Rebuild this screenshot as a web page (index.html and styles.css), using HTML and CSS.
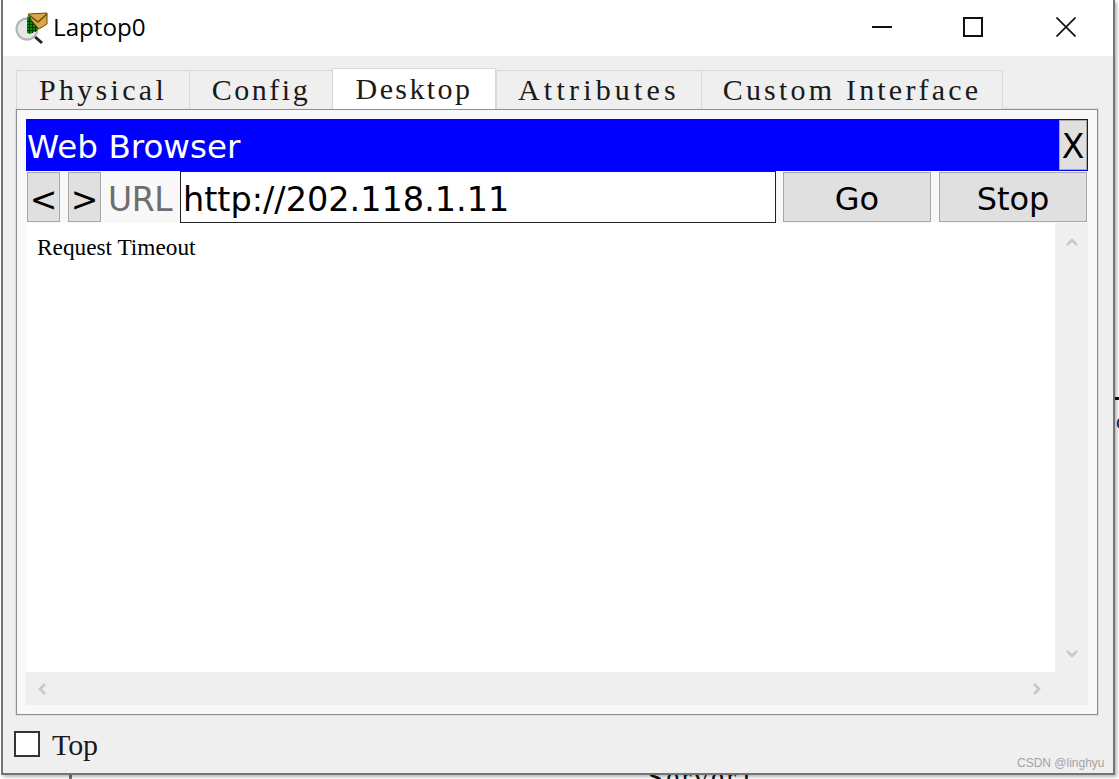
FILE: index.html
```html
<!DOCTYPE html>
<html lang="en">
<head>
<meta charset="utf-8">
<title>Laptop0</title>
<link rel="stylesheet" href="styles.css">
</head>
<body>
<div class="desktop">
  <div class="bg-label">Server1</div>
  <div class="bg-link"></div>
  <div class="bg-edge-line"></div>
  <div class="bg-edge-char">c</div>
  <div class="window">
    <header class="titlebar">
      <svg class="app-icon" width="34" height="34" viewBox="0 0 34 34">
        <line x1="18" y1="23" x2="27" y2="31" stroke="#222" stroke-width="3"/>
        <circle cx="12" cy="17" r="10.5" fill="#e6e6e6" stroke="#b4b4b4" stroke-width="2"/>
        <path d="M12 5 L16 3 L24 10 L23 18 L15 22 L12 21 Z" fill="#0a8a0a"/>
        <path d="M14 4h1v17h-1zM17 5h1v16h-1zM20 7h1v13h-1zM12 9h11v1H12zM12 12h11v1H12zM12 15h11v1H12zM12 18h10v1H12z" fill="#003c00"/>
        <path d="M13 2 L32 1 L32 12 L24 17 L17 9 Z" fill="#d9a648" stroke="#6a4a10" stroke-width="1"/>
        <path d="M14 3 L23 10 L32 2" fill="none" stroke="#6a4a10" stroke-width="1.5"/>
      </svg>
      <span class="title">Laptop0</span>
      <div class="controls">
        <svg class="ctl ctl-min" width="20" height="20" viewBox="0 0 20 20"><rect x="0" y="9" width="20" height="2" fill="#111"/></svg>
        <svg class="ctl" width="20" height="20" viewBox="0 0 20 20"><rect x="1" y="1" width="18" height="18" fill="none" stroke="#111" stroke-width="2"/></svg>
        <svg class="ctl" width="20" height="20" viewBox="0 0 20 20"><path d="M0.5 0.5L19.5 19.5M19.5 0.5L0.5 19.5" stroke="#111" stroke-width="1.7"/></svg>
      </div>
    </header>
    <main class="body">
      <nav class="tabs">
        <div class="tab tab-physical">Physical</div>
        <div class="tab tab-config">Config</div>
        <div class="tab tab-desktop">Desktop</div>
        <div class="tab tab-attributes">Attributes</div>
        <div class="tab tab-custom">Custom Interface</div>
      </nav>
      <section class="panel-outer">
        <div class="panel">
          <div class="bluebar">
            <span class="bluebar-title">Web Browser</span>
            <button class="btn close">X</button>
          </div>
          <div class="toolbar">
            <button class="btn nav">&lt;</button>
            <button class="btn nav">&gt;</button>
            <span class="url-label">URL</span>
            <div class="url-input">http://202.118.1.11</div>
            <button class="btn action">Go</button>
            <button class="btn action">Stop</button>
          </div>
          <div class="viewer">
            <div class="viewer-top">
              <div class="page">Request Timeout</div>
              <div class="vscroll">
                <svg width="14" height="10" viewBox="0 0 14 10"><path d="M2 8L7 3L12 8" fill="none" stroke="#c8c8c8" stroke-width="2.6"/></svg>
                <svg width="14" height="10" viewBox="0 0 14 10"><path d="M2 2L7 7L12 2" fill="none" stroke="#c8c8c8" stroke-width="2.6"/></svg>
              </div>
            </div>
            <div class="hscroll">
              <svg width="10" height="14" viewBox="0 0 10 14"><path d="M8 2L3 7L8 12" fill="none" stroke="#c8c8c8" stroke-width="2.6"/></svg>
              <svg width="10" height="14" viewBox="0 0 10 14"><path d="M2 2L7 7L2 12" fill="none" stroke="#c8c8c8" stroke-width="2.6"/></svg>
            </div>
          </div>
        </div>
      </section>
      <footer class="bottom">
        <span class="checkbox"></span>
        <span class="top-label">Top</span>
      </footer>
      <div class="watermark">CSDN @linghyu</div>
    </main>
  </div>
</div>
</body>
</html>
```
FILE: styles.css
```css
* { box-sizing: border-box; }
html, body { margin: 0; padding: 0; }
body { width: 1119px; height: 779px; overflow: hidden; background: #fff; }
.desktop { position: relative; width: 1119px; height: 779px; overflow: hidden; background: #fff; }

.bg-label { position: absolute; left: 647px; top: 760px; font: 30px/34px "Liberation Serif", serif; letter-spacing: 2.2px; color: #111; }
.bg-link { position: absolute; left: 69px; top: 770px; width: 3px; height: 9px; background: #777; }
.bg-edge-line { position: absolute; left: 1113px; top: 397px; width: 6px; height: 3px; background: #111; }
.bg-edge-char { position: absolute; left: 1116px; top: 410px; font: 20px/24px "Liberation Sans", sans-serif; color: #124; }

.window {
  position: absolute; left: 1px; top: 0; width: 1114px; height: 775px;
  display: flex; flex-direction: column;
  background: #efefef;
  border: solid #747474; border-width: 0 2px 2px 2px;
  box-shadow: 2px 2px 3px rgba(0,0,0,.28);
}
.titlebar { display: flex; align-items: center; height: 56px; flex: none; background: #fff; padding-left: 12px; }
.app-icon { flex: none; margin-right: 4px; margin-top: 2px; overflow: visible; }
.title { font: 24.2px/32px "Open Sans", "Noto Sans", sans-serif; color: #000; margin-top: -3px; }
.controls { margin-left: auto; display: flex; gap: 73px; padding-right: 37px; margin-top: -2px; }
.ctl { display: block; }
.ctl-min { margin-right: -2px; }

.body { position: relative; flex: 1; display: flex; flex-direction: column; }
.tabs { display: flex; align-items: flex-end; height: 53px; padding-left: 13px; margin-bottom: -1px; }
.tab {
  position: relative; height: 39px; display: flex; align-items: center; justify-content: center;
  background: #efefef; border: 1px solid #d8d8d8; border-bottom: 0; margin-right: -1px;
  font: 30px/36px "Liberation Serif", serif; letter-spacing: 3px; color: #1a1a1a;
}
.tab-physical { width: 174px; letter-spacing: 3.3px; }
.tab-config { width: 144px; letter-spacing: 2.5px; }
.tab-desktop { width: 164px; height: 41px; background: #fff; z-index: 1; margin-right: 0; padding-bottom: 1px; letter-spacing: 2.4px; }
.tab-attributes { width: 206px; letter-spacing: 4.2px; }
.tab-custom { width: 302px; margin-right: 0; letter-spacing: 3.2px; }

.panel-outer { margin-left: 12px; width: 1084px; height: 608px; border: 1px solid #dcdcdc; flex: none; }
.panel { width: 100%; height: 100%; border: 1px solid #8b8f96; background: #f8f8f8; padding: 9px; display: flex; flex-direction: column; margin: 0; }

.bluebar { display: flex; align-items: center; justify-content: space-between; height: 52px; flex: none; background: #0000ff; padding-right: 1px; }
.bluebar-title { font: 32.6px/44px "DejaVu Sans", sans-serif; color: #fff; padding-left: 1px; margin-top: 3px; }
.btn { display: flex; align-items: center; justify-content: center; padding: 0; background: #e0e0e0; border: 1px solid #a8a8a8; color: #000; font-family: "DejaVu Sans", sans-serif; }
.close { width: 28px; height: 50px; font-size: 33px; padding-top: 3px; }

.toolbar { display: flex; align-items: center; height: 52px; flex: none; padding: 0 1px; }
.nav { width: 33px; height: 50px; font-size: 33px; margin-right: 8px; padding-top: 5px; }
.url-label { font: 33px/44px "DejaVu Sans", sans-serif; color: #6e6e6e; margin-right: 6px; margin-left: -1px; width: 66px; white-space: nowrap; letter-spacing: -.45px; padding-top: 5px; }
.url-input { width: 596px; height: 52px; background: #fff; border: 1px solid #222; font: 33.5px/56px "DejaVu Sans", sans-serif; color: #000; padding-left: 2px; margin-right: 7px; white-space: nowrap; }
.action { width: 148px; height: 50px; font-size: 32px; margin-right: 8px; padding-top: 3px; }
.action:last-child { margin-right: 0; }

.viewer { flex: 1; display: flex; flex-direction: column; min-height: 0; }
.viewer-top { flex: 1; display: flex; min-height: 0; }
.page { flex: 1; background: #fff; padding: 11px 11px; font: 23.3px/26px "Liberation Serif", serif; color: #000; }
.vscroll { width: 33px; background: #efefef; display: flex; flex-direction: column; justify-content: space-between; align-items: center; padding: 14px 0 13px; }
.hscroll { height: 33px; flex: none; background: #efefef; display: flex; align-items: center; justify-content: space-between; padding: 0 46px 0 11px; }
.vscroll svg, .hscroll svg { display: block; }

.bottom { display: flex; align-items: center; height: 57px; padding-left: 11px; flex: none; }
.checkbox { width: 26px; height: 26px; background: #fff; border: 2px solid #333; margin-right: 12px; margin-top: -2px; }
.top-label { font: 30px/36px "Liberation Serif", serif; letter-spacing: -.1px; color: #1a1a1a; }
.watermark { position: absolute; left: 1014px; bottom: 2px; font: 12px/16px "Liberation Sans", sans-serif; color: #a4a4a4; }
```
